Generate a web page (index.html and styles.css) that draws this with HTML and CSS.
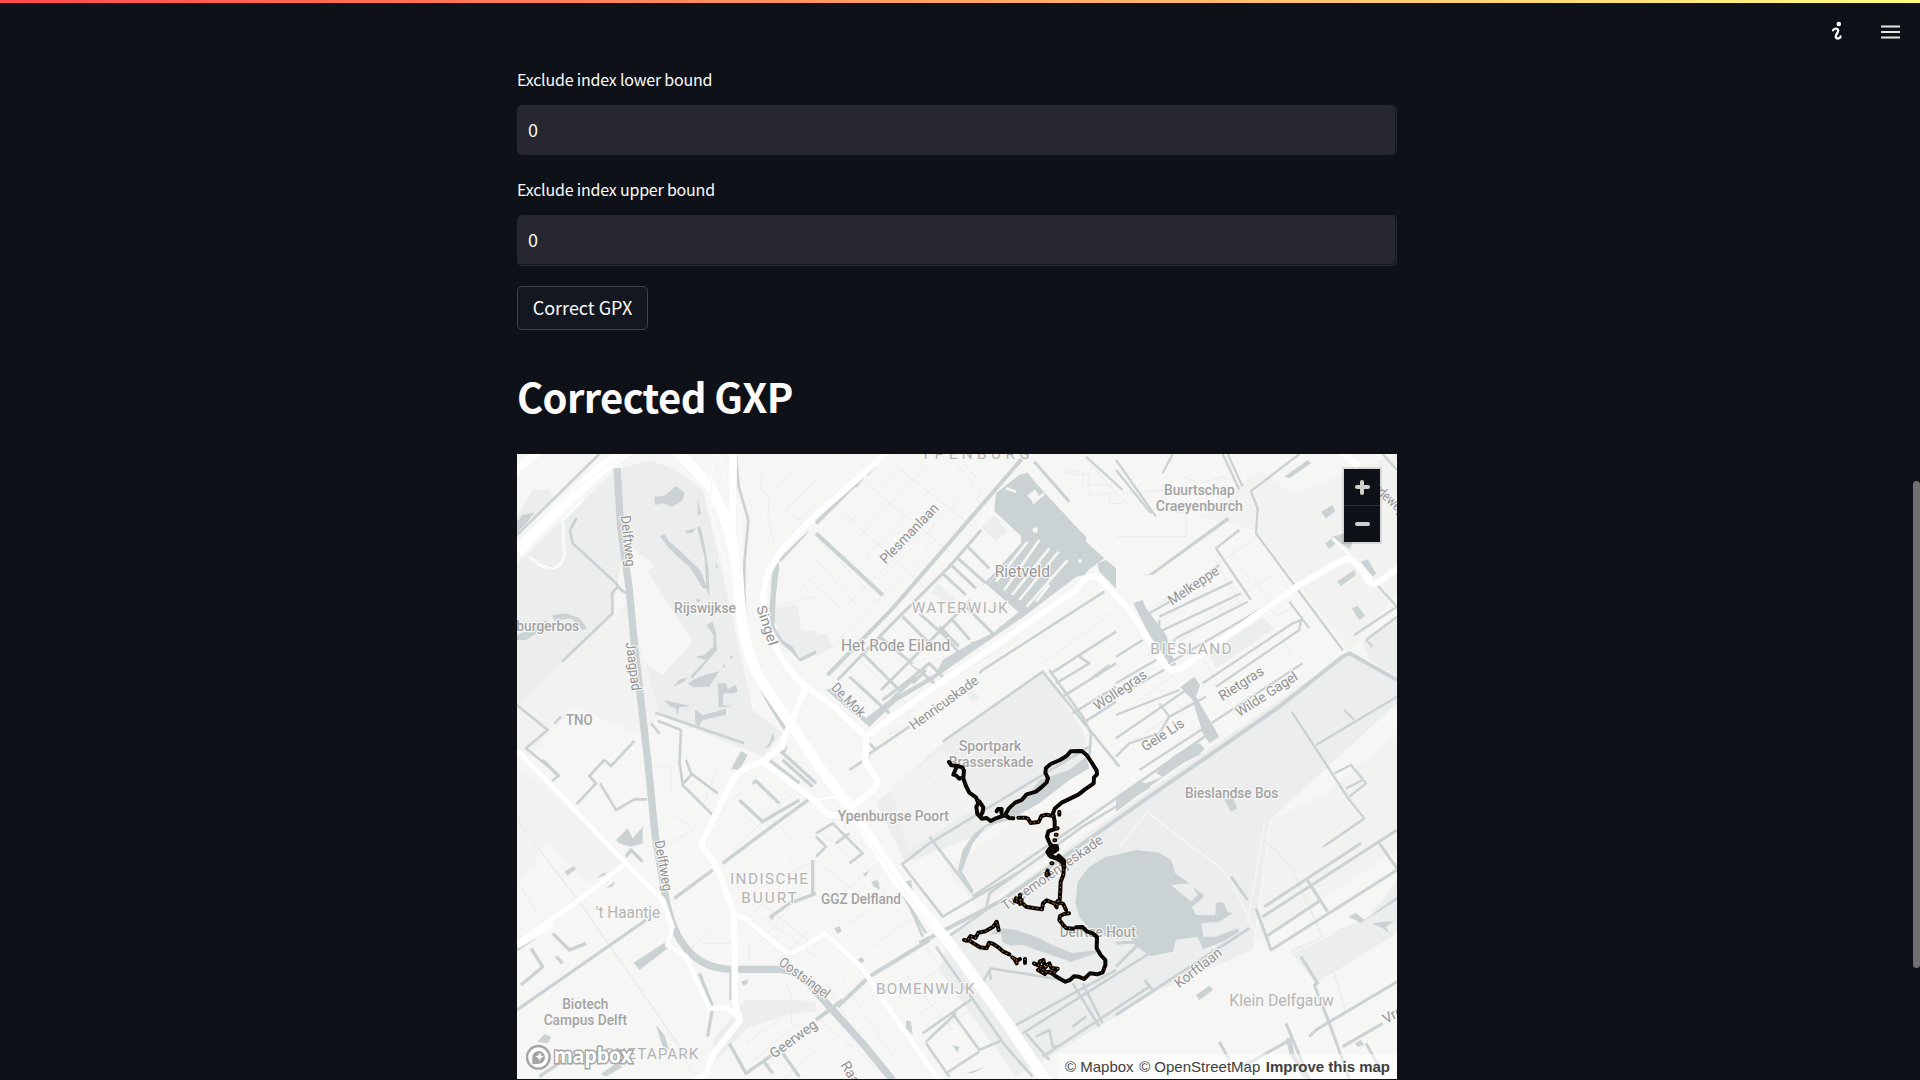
FILE: index.html
```html
<!DOCTYPE html>
<html lang="en">
<head>
<meta charset="utf-8">
<title>GPX Corrector</title>
<link rel="stylesheet" href="styles.css">
</head>
<body>
<div class="decoration"></div>
<header class="toolbar">
  <svg class="info" viewBox="0 0 10 20"><circle cx="6.8" cy="3" r="2.3"/><path d="M1 9.3C2 7.4 5.8 6.8 6.2 9.2C6.5 11.4 2.7 14.6 4 16.6C5 18.2 8 17.5 8.6 15.6"/></svg>
  <svg class="menu" viewBox="0 0 19 14"><path d="M0 1.5H19M0 7H19M0 12.5H19"/></svg>
</header>
<main class="content">
  <label class="field"><span class="field-label">Exclude index lower bound</span><span class="input">0</span></label>
  <label class="field upper"><span class="field-label">Exclude index upper bound</span><span class="input">0</span></label>
  <button class="button">Correct GPX</button>
  <h1>Corrected GXP</h1>
  <section class="map">
  <svg class="map-canvas" viewBox="3 12 2640 1875">
    <!-- Land use -->
    <g class="park">
      <path d="M3 340L300 60L400 30L480 60L560 120L620 370L710 780L800 850L740 920L420 790L390 640L440 675L530 575L395 365L415 345L330 280L300 420L290 490L140 635L3 770Z"/>
      <path d="M3 200L50 120L100 120L110 150L3 240Z"/>
      <path d="M765 475L845 465L855 540L900 545V600L850 632L790 560Z"/>
      <path d="M1280 880L1580 665L1700 840L1720 930L1400 1150L1170 1240L1080 1060Z"/>
      <path d="M1300 1460L1700 1160L2480 620L2500 610L2643 690V760L2260 1110L2210 1500L1930 1620L1500 1880L1270 1560Z"/>
      <path d="M2080 610L2240 500L2275 535L2100 655Z"/>
      <path d="M2643 500L2540 575L2560 630L2643 680Z"/>
      <path d="M2320 1500L2560 1400L2643 1290V1450L2400 1600Z"/>
      <path d="M1245 430L1265 400L1320 450L1300 465ZM900 560L930 550L950 590L900 620ZM1350 730L1370 720L1390 740L1370 755Z"/>
      <path d="M590 1770L640 1710L690 1650L830 1650L900 1655V1685L830 1690L700 1730L600 1830Z"/>
    </g>
    <g class="land">
      <path d="M3 770L140 635L340 450L390 650L430 790L380 860L180 770L30 930L3 900Z"/>
      <path d="M3 940L330 1240L220 1300L100 1180L3 1300Z"/>
      <path d="M1290 1260L1550 1080L1690 1080L1640 1190L1390 1380Z"/>
      <path d="M2265 1110L2430 1030L2643 850V1200L2220 1480Z"/>
      <path d="M1120 1010L1180 1200L1400 1060L1280 900Z"/>
      <path d="M2050 200L2230 60L2330 130L2643 12V430L2500 600L2220 240Z"/>
    </g>
    <!-- Local streets -->
    <g class="street">
      <path d="M725 55l15 30-10 25 30 35-5 70 20 60M800 50l25 25-45 40M810 180l90-90M810 180l40 30 50-50M845 430l55-60M770 475l80-25 50-10"/>
      <path d="M900 100l90-90M950 180l150-160M985 230l190-190M1010 280l220-230M1050 320l250-260M1100 380l270-270M930 530l260-260M940 600l320-330M975 180l270 250M1050 100l280 230M1130 40l240 190M910 270l180 190M900 330l120 130M900 410l70 60"/>
      <path d="M1320 40l80 90-20 20M1340 35l50 60M1640 50l10 20 70 5v60l60-5v30h40M1700 20l140 150M1650 60l50 5v40h90"/>
      <path d="M1320 640l210-150 220-160M1370 650l130-80M1580 640l220-160M1590 680l60 80M1000 600l180 170M980 640l110 120M1120 790l60-70M1220 560l60 60M1240 600l60-60M1060 850l110-80 10 45-60 40"/>
      <path d="M1870 500l200-130 150-110M1890 620l250-160 130-85M1920 520l130-85M1980 580l200-130M2090 320l90 150M2140 290l60 100M2210 380l50 75M2250 450l30 50 50-30 30 40M1800 800l180-130M1810 900l240-160M1960 720l50 80M2060 620l60 100M2180 530l50 90M2240 580l150-100M2290 550l40 70M1800 260h210v-70l-70-10v-60l-120 10M2000 80l50 20 80-20v60"/>
      <path d="M345 1050h50v-100h70v70M470 1090l60 50-100 60M600 960l-40 110 60 50M600 1100l180-180M650 1200l180-170M670 1080l170 160M720 1050l110 120M700 1330l200-100M660 1300l240 190M680 1420l120-120M730 1480l110-130M790 1530l100-100M560 1480h100M520 1500l60-60M700 1470v60M740 1400l160 120"/>
      <path d="M900 1140l170 130 80 120M920 1250l120 90M930 1370l180-150M1000 1420l120-80M1070 1490l110-80M1110 1560l130-90M1150 1640l170-120M1200 1700l180-130M1150 1550l160 190M1230 1490l140 200M980 1590l150 230M900 1700l180 150M930 1600l70 120M1250 1750l150-90"/>
      <path d="M900 1040l60 80M1150 1030l90-50 60 70M1280 960l30-20 30 60M3 1290l60 100M3 1110l190 250 250 360 100 170M810 1600l20 50-5 70M690 1780l110-80M700 1840l160-130M740 1860l130-110M800 1890l100-90"/>
      <path class="wide" d="M3 1110l190 250 250 360 80 110M2140 1080l50 60 90 60 50 60 80 180 30 80 50 170"/>
      <path class="path" d="M1900 1090l100 80 110 80 40 50 50 110 30 60M2245 1120l-30 180-20 120M2320 1480l50-20 230-180M1810 1190l90-110M2250 1550l200-100"/>
    </g>
    <!-- Canals and lakes -->
    <g class="water">
      <path d="M415 140L445 138L480 108L505 128L500 150L470 170L440 160L417 165ZM110 495L150 490L190 505L213 535L200 540L165 505L115 512ZM3 555L40 540L90 510L95 520L70 545L30 570H3ZM3 215L20 195L55 188L35 215L3 250ZM545 148L555 190L545 200ZM507 242L540 235L530 248L512 250ZM432 258L445 253L460 275L490 300L520 330L552 360L575 415L560 415L540 380L520 350L480 315L455 290ZM543 232L553 230L565 280L578 360L580 440L572 420L565 320ZM537 445L555 450L545 460ZM597 338L607 352L600 355Z"/>
      <path d="M572 525L590 515L600 550L603 600L530 685L522 680L570 630L538 620L565 615L592 590L592 555ZM472 710L490 688L515 683L505 695ZM515 700L550 680L610 663L580 710L530 712ZM605 700L630 700L635 718L660 705L665 725L650 730L622 730L620 765L655 768L608 772L607 735ZM445 750L525 768L490 772L483 800L480 775L460 768ZM537 778L560 795L600 785L630 775L630 795L560 810L548 830L538 820ZM618 650L628 640L625 655ZM640 615L652 620L645 628ZM675 903L695 915L670 960L645 957ZM770 848L775 865L760 890L745 895L760 880ZM795 910L815 885L810 905ZM770 340L785 330L790 350L780 430L775 530L800 570L830 590L850 625L900 600V612L852 635L830 610L795 580L765 530L760 480L765 420ZM785 330L880 240L870 255L795 335Z"/>
      <path d="M1440 130L1510 75L1535 68L1560 100L1690 240L1710 260L1710 275L1765 325L1720 358L1705 375L1680 380L1530 495L1340 625L1250 690L1140 755L1060 830L930 720L945 715L1050 805L1120 750L1260 670L1280 630L1305 615L1365 580L1430 550L1500 490L1420 400L1515 290V258L1435 183Z"/>
      <path d="M1745 340L1770 330L1800 355V415L1750 365ZM1000 110L1040 75L1045 80L1025 112Z"/>
      <path d="M1872 372H1900L2135 200L2140 210L1910 375ZM1852 460L1880 450L1890 475L1950 555L1975 635L1960 640L1900 555ZM1992 712L2035 680L2052 705L2040 740L2110 860L2080 880L2060 850L2030 750ZM2305 80L2375 30L2385 40L2320 85ZM2415 185L2450 165L2457 185L2430 205ZM2427 280L2455 260L2465 275L2440 297ZM2463 395L2515 360L2520 375L2475 408ZM2507 475L2525 468L2547 497L2530 510ZM2535 335L2555 328L2580 370L2570 382ZM2450 260L2485 250L2510 280L2500 297Z"/>
      <path d="M1920 970L1970 920L2020 890L2050 880L2065 895L2050 915L2000 940L1900 1010L1800 1085V1040L1870 995L1890 1000L1940 980ZM1325 1265L1340 1200L1375 1150L1430 1110L1550 1020L1570 990L1660 960L1710 920L1720 955L1660 990L1570 1060L1480 1110L1410 1130L1370 1180L1350 1230L1340 1260Z"/>
      <path d="M1800 1215L1860 1200L1930 1208L1965 1230L1978 1270L2020 1300L1965 1305L2025 1355L2045 1335L2030 1310L2063 1335L2060 1345L2028 1370L2040 1395H2098L2100 1360L2120 1355L2135 1385L2150 1390L2110 1415L2055 1420L2062 1460L2100 1460L2165 1435L2170 1445L2120 1475L2062 1497L2045 1460L1980 1470L1970 1505L1905 1518L1860 1490L1845 1465L1800 1465L1730 1450L1690 1400L1678 1360L1685 1295L1720 1250L1770 1220Z"/>
      <path d="M1455 1435L1500 1440L1560 1460L1620 1490L1670 1510L1740 1500V1510L1665 1536L1520 1485L1485 1487L1458 1475ZM1420 1455L1450 1430L1460 1450ZM2123 1045L2150 1040L2163 1075L2145 1085ZM2497 1400L2520 1388L2545 1410L2643 1340V1350L2535 1418ZM2568 1420L2600 1415L2635 1413L2610 1430L2618 1450L2600 1435ZM2040 1635L2080 1607L2092 1620L2050 1650ZM2417 1190L2540 1105L2545 1110L2425 1192ZM2310 1765L2325 1765L2335 1810L2380 1887L2360 1880L2320 1810ZM2517 1780L2535 1770L2545 1785L2525 1790ZM1165 1295l20-5 5 30-12-5ZM1170 1710l15 5 5 40-20-20ZM1310 1785l20 5-5 20ZM1350 1870l60-20-40 20ZM1040 1272l18-10-8 18ZM1065 1295l20-5 7 30-18-10ZM955 1435l15-6 8 14-14 8ZM1022 1530l16-8 8 12-12 6Z"/>
      <path d="M353 1538L445 1478L455 1495L370 1560ZM65 1775L85 1752L105 1760L95 1780ZM255 1872L300 1840L320 1850L270 1880ZM300 1170L335 1135L350 1165L380 1130V1180L345 1190L310 1180ZM145 1265L175 1247L180 1257L155 1277ZM240 1285L268 1265L268 1275ZM270 1315L298 1293L290 1310ZM675 1595L695 1587L695 1600L683 1607ZM757 1400L778 1390L770 1410ZM420 1725L445 1755L460 1800L440 1790Z"/>
    </g>
    <g class="canal">
      <path stroke-width="22" d="M303 55L314 230L340 420L355 580L395 930L418 1160L450 1350Q470 1440 500 1480Q550 1558 650 1558H790Q850 1560 900 1625L1040 1780L1130 1890"/>
      <path stroke-width="8" d="M3 255L250 12M660 12L668 110L697 210L685 340V440M162 240L182 204M162 240L170 280L300 400L320 425M330 430L305 410L288 430L290 490L138 635M418 788L685 880M3 765L95 840L30 895L110 960L128 978L108 993M115 820L135 800M182 1062L240 1000L220 978L265 930L285 948L355 873M252 1000L300 1080L355 1048H392M405 820L430 850M425 812L495 840L490 950M490 930L500 1005L590 1095M510 930L525 970L605 1030M497 1005L530 970"/>
      <path stroke-width="12" d="M900 220L1040 80M1050 75L1100 20M900 250L1100 435M935 675L1130 475L1530 12"/>
      <path stroke-width="9" d="M965 690L1120 530L1300 350L1430 200M1555 35L1660 155M1095 720L1315 500L1430 380L1530 270M1125 750L1200 680M1000 680L1120 790M1040 610L1150 720M1090 560L1200 650M1160 500L1250 590M1100 750L1180 690L1240 640L1280 680M1210 490L1300 570M1300 340L1380 415M1320 320L1410 400M1350 285L1420 355M1280 370L1350 435M1408 395L1520 500M1350 470L1430 550M1310 510L1380 590M1280 550L1330 610M1390 470L1460 540M1270 530L1330 590M1185 640L1255 700M1190 700L1230 660"/>
      <path stroke-width="8" d="M1280 875L1580 665L1810 950M1055 915L1180 830M1390 670L1400 660L1765 425M1605 670L1800 545M1600 660L1700 800L1725 850L1720 925M1620 700L1720 640L1690 620M1640 740L1800 640M1670 790L1800 710M1700 820L1800 755M1000 960L1060 920M1060 880L1080 900M1720 690l60-45M1740 680l40-35"/>
      <path stroke-width="8" d="M1370 1340L1700 1115L2080 850M1160 1245L1280 1400L1510 1265M1240 1160L1370 1330M1330 1260L1370 1325M1155 1245L1240 1180L1720 890M1290 1465L1410 1380L1420 1330L1700 1130L1900 1010"/>
      <path stroke-width="12" d="M1210 1480L1460 1350L1900 1040L2060 930L2290 770L2480 620L2500 610L2643 690M1240 1470L1060 1580L965 1670M900 1710L980 1650"/>
      <path stroke-width="7" d="M1800 30L1920 200M1800 60L1905 190M1710 20L1820 120M1940 70L1970 12M2120 12L2170 120M2135 12L2180 110M2203 125L2350 12M2600 12L2643 60M2205 125L2225 175L2220 250L2480 600M2170 240L2100 295L2205 450M1900 490L1970 450M1970 450L2110 345M1930 500L2150 395M1920 550L2175 430M1980 565L2195 455M1940 650L2350 410M1930 510V530M1975 565V590M2320 455L2380 535M2450 260L2643 470M2515 555L2643 470M2550 570L2643 500M2550 570L2570 590M2060 700L2330 520M2330 520L2355 510L2350 540L2100 710M1800 795L1990 720M1800 865L2040 700M1800 620L1880 570M1800 700L1920 630M1800 740L1980 640M1930 760L1960 800M1800 920L1840 880L1930 850L1960 800L2070 740M1870 960L2070 830L2360 640M2327 785L2500 1050L2545 1105L2430 1185M2400 885L2643 740M2485 780L2515 810M2455 970L2505 945L2550 1000L2500 1040M2490 1015L2540 990"/>
      <path stroke-width="9" d="M2240 1400L2643 1140M2245 1370L2535 1180M2220 1375L2265 1500L2643 1260M2250 1460L2415 1350M2370 1285L2435 1385M2590 1180L2643 1255M2145 1280L2195 1350M1800 1695L1930 1610L2200 1435M1800 1550L1860 1490M1800 1480L1870 1475M1885 1590L1910 1620M2355 1520L2405 1600L2395 1605L2440 1720L2500 1887M2380 1760L2400 1740L2643 1595M2480 1790L2600 1720M2550 1780L2600 1870M2110 1775L2140 1830M2180 1850L2330 1765M2310 1720L2380 1887"/>
      <path stroke-width="8" d="M1420 1560L1425 1590M1400 1595L1425 1555L1640 1590M1500 1725L1800 1560M1520 1750L1900 1510M1670 1600L1750 1730M1700 1600L1760 1720M1580 1820L1900 1610M1560 1760L1600 1740L1610 1790L1640 1785M1530 1750L1600 1830M1670 1730L1710 1700M1220 1750L1370 1645M1230 1775L1320 1690M1310 1690L1390 1800L1460 1770M1230 1780L1300 1880M1390 1805L1290 1870M1260 1490L1470 1790L1550 1880M1000 1070L1230 1450M1010 1100L1140 1270L1220 1460M1000 1240L1040 1210L950 1120L900 1150M960 1180L1000 1150M900 1220L930 1190L900 1160"/>
      <path stroke-width="10" d="M3 1680L390 1410M475 1345L590 1260M620 1240L780 1120L890 1040M670 1050L740 1115L850 1050M710 1000L720 993L790 1060M3 1500L60 1460M110 1450L160 1500L210 1480M45 1495L80 1550L15 1605M120 1520L140 1540M765 1400L820 1360L900 1330M890 1330V1230M640 1780L690 1870L790 1800M740 1830L770 1870M800 1810L850 1880M550 1570L590 1670L575 1760M645 1570V1650M70 1880L150 1825M330 1220L345 1200L380 1235M80 930L128 978M760 930L850 1000M800 930L890 1010M780 890L900 1000M685 440L690 600Q720 710 810 840"/>
    </g>
    <g class="gap">
      <path d="M1470 115L1500 125M1550 160L1585 130M1440 395L1535 275M1465 420L1570 270M1488 435L1600 295M1510 450L1628 305M1532 470L1655 330M1560 455L1600 405M1330 590L1370 570M1190 640L1210 655"/>
      <path d="M1540 137L1556 125L1567 140L1552 152Z"/>
      <circle cx="1558" cy="240" r="4"/><circle cx="1692" cy="333" r="2"/>
      <path d="M1355 440L1408 400L1508 487L1445 535L1390 485Z" class="island"/>
    </g>
    <path class="plot" d="M1435 190L1392 232L1440 277L1478 245Z"/>
    <!-- Main roads -->
    <g class="road">
      <path stroke-width="34" d="M480 0L580 105Q640 200 665 380Q675 600 740 700L810 800L910 950L1000 1070L1150 1300L1300 1480L1460 1700L1595 1900"/>
      <path stroke-width="23" d="M652 0L648 240L670 400"/>
      <path stroke-width="38" d="M350 -15L240 70L120 185L3 305"/>
      <path stroke-width="26" d="M-10 70L65 5"/>
      <path stroke-width="20" d="M1120 0L1060 55L900 195L830 265Q745 350 742 440Q745 600 870 710L960 775L1050 860L1200 750L1400 612L1680 420Q1725 350 1760 395L1840 480L1950 650Q1970 672 2010 645L2230 490L2350 405L2480 330Q2505 320 2525 345L2555 390Q2570 408 2590 395L2650 350"/>
      <path stroke-width="20" d="M1050 855L1048 935L1085 990Q1088 1010 1060 1030L980 1090Q940 1115 900 1055L740 935Q660 955 640 1010L555 1185L600 1245L655 1390L657 1660L672 1710L610 1790Q575 1830 575 1870L510 1900M870 710L795 890L740 935"/>
      <path stroke-width="16" d="M3 900L330 1240L440 1350L468 1430L455 1485L510 1520L580 1675L630 1672L670 1705M330 1240L170 1365L3 1480M655 1405Q680 1390 710 1425L815 1510Q830 1515 925 1450L1040 1555L1100 1650L1275 1900"/>
      <path stroke-width="22" d="M2470 0L2530 50M110 1420L3 1485"/>
      <path stroke-width="9" d="M598 0L585 120Q580 220 645 380M610 0L625 80L675 180L672 380M140 210L145 310Q140 355 100 355Q70 350 40 320M140 210L200 150M900 1050L960 1040L1010 1090M2450 265L2570 385"/>
    </g>
    <g class="ramp"><path d="M598 0L585 120Q580 220 645 380M610 0L625 80L675 180L672 380M140 210L145 310Q140 355 100 355Q70 350 40 320M3 270L180 115L330 12M2450 265L2570 385M980 1060L1100 1230L1300 1510"/></g>
    <!-- Place names -->
    <g class="label road-name">
      <text transform="translate(337 273) rotate(84)" dy=".35em" textLength="154" lengthAdjust="spacingAndGlyphs">Delftweg</text>
      <text transform="translate(353 649) rotate(83)" dy=".35em" textLength="146" lengthAdjust="spacingAndGlyphs">Jaagpad</text>
      <text transform="translate(754 526) rotate(72)" dy=".35em" textLength="124" lengthAdjust="spacingAndGlyphs">Singel</text>
      <text transform="translate(1179 250) rotate(-46)" dy=".35em" textLength="232" lengthAdjust="spacingAndGlyphs">Plesmanlaan</text>
      <text transform="translate(998 749) rotate(45)" dy=".35em" textLength="124" lengthAdjust="spacingAndGlyphs">De Mok</text>
      <text transform="translate(1283 758) rotate(-36)" dy=".35em" textLength="244" lengthAdjust="spacingAndGlyphs">Henricuskade</text>
      <text transform="translate(2032 406) rotate(-34)" dy=".35em" textLength="174" lengthAdjust="spacingAndGlyphs">Melkeppe</text>
      <text transform="translate(1812 720) rotate(-34)" dy=".35em" textLength="182" lengthAdjust="spacingAndGlyphs">Wollegras</text>
      <text transform="translate(2175 700) rotate(-33)" dy=".35em" textLength="152" lengthAdjust="spacingAndGlyphs">Rietgras</text>
      <text transform="translate(2251 732) rotate(-33)" dy=".35em" textLength="212" lengthAdjust="spacingAndGlyphs">Wilde Gagel</text>
      <text transform="translate(1940 854) rotate(-33)" dy=".35em" textLength="144" lengthAdjust="spacingAndGlyphs">Gele Lis</text>
      <text transform="translate(443 1247) rotate(80)" dy=".35em" textLength="154" lengthAdjust="spacingAndGlyphs">Delftweg</text>
      <text transform="translate(866 1583) rotate(36)" dy=".35em" textLength="178" lengthAdjust="spacingAndGlyphs">Oostsingel</text>
      <text transform="translate(832 1766) rotate(-36)" dy=".35em" textLength="164" lengthAdjust="spacingAndGlyphs">Geerweg</text>
      <text transform="translate(1608 1268) rotate(-35)" dy=".35em" textLength="360" lengthAdjust="spacingAndGlyphs">Tweemolentjeskade</text>
      <text transform="translate(2046 1553) rotate(-38)" dy=".35em" textLength="166" lengthAdjust="spacingAndGlyphs">Korftlaan</text>
      <text transform="translate(1014 1885) rotate(59)" dy=".35em" textLength="112" lengthAdjust="spacingAndGlyphs">Raam</text>
      <text transform="translate(2650 1682) rotate(-30)" dy=".35em" textLength="110" lengthAdjust="spacingAndGlyphs">Vrede</text>
      <text transform="translate(2601 128) rotate(42)" dy=".35em" textLength="174" lengthAdjust="spacingAndGlyphs">Noordeweg</text>
    </g>
    <g class="label place">
      <text x="567" y="489" textLength="186" lengthAdjust="spacingAndGlyphs">Rijswijkse</text>
      <text x="95" y="543" textLength="188" lengthAdjust="spacingAndGlyphs">burgerbos</text>
      <text x="190" y="826" textLength="80" lengthAdjust="spacingAndGlyphs">TNO</text>
      <text x="1422" y="903" textLength="188" lengthAdjust="spacingAndGlyphs">Sportpark</text>
      <text x="1425" y="950" textLength="254" lengthAdjust="spacingAndGlyphs">Brasserskade</text>
      <text x="2050" y="136" textLength="212" lengthAdjust="spacingAndGlyphs">Buurtschap</text>
      <text x="2050" y="183" textLength="262" lengthAdjust="spacingAndGlyphs">Craeyenburch</text>
      <text x="208" y="1677" textLength="138" lengthAdjust="spacingAndGlyphs">Biotech</text>
      <text x="208" y="1725" textLength="250" lengthAdjust="spacingAndGlyphs">Campus Delft</text>
      <text x="1132" y="1112" textLength="334" lengthAdjust="spacingAndGlyphs">Ypenburgse Poort</text>
      <text x="1035" y="1361" textLength="240" lengthAdjust="spacingAndGlyphs">GGZ Delfland</text>
      <text x="2147" y="1043" textLength="280" lengthAdjust="spacingAndGlyphs">Bieslandse Bos</text>
      <text x="1745" y="1461" textLength="228" lengthAdjust="spacingAndGlyphs">Delftse Hout</text>
    </g>
    <g class="label town">
      <text x="1519" y="382" textLength="166" lengthAdjust="spacingAndGlyphs">Rietveld</text>
      <text x="1139" y="602" textLength="328" lengthAdjust="spacingAndGlyphs">Het Rode Eiland</text>
      <text class="pale" x="336" y="1404" textLength="193" lengthAdjust="spacingAndGlyphs">'t Haantje</text>
      <text class="pale" x="2297" y="1669" textLength="314" lengthAdjust="spacingAndGlyphs">Klein Delfgauw</text>
    </g>
    <g class="label district">
      <text x="1378" y="27" textLength="326">YPENBURG</text>
      <text x="1331" y="489" textLength="288">WATERWIJK</text>
      <text x="2025" y="611" textLength="244">BIESLAND</text>
      <text x="759" y="1303" textLength="234">INDISCHE</text>
      <text x="759" y="1358" textLength="166">BUURT</text>
      <text x="1228" y="1632" textLength="296">BOMENWIJK</text>
      <text x="389" y="1826" textLength="316">AGNETAPARK</text>
    </g>
    <!-- Recorded track -->
    <defs>
      <g id="loop" transform="translate(1242 870)">
        <path d="M57 66L64 76L82 78L97 82L102 92L100 112L88 116L78 106L70 104L78 85M100 115L108 138L118 158L138 172L145 190L139 200L142 222L155 236L170 234L182 243L198 235L225 225L236 206L255 188L275 180L290 163L318 155L333 143L350 127L354 115L346 98L348 84L362 72L390 60L410 48L422 34L455 33L470 45L484 66L500 92L501 103L492 112L491 130L465 148L445 164L395 188L375 205L369 220L374 243L374 267L355 274L351 290L357 305M148 184L160 202L158 216L150 230M225 225L238 234L250 235M200 214L204 207L215 207L214 218"/>
        <path d="M360 312L366 318L380 318L382 328L374 334L357 344L352 336L366 316L373 324L355 332L362 350L380 356L386 347L402 362L402 380L396 365L374 352L358 346M438 562L458 561L470 574L488 580L501 592L500 625L512 645L526 660L526 675L518 697L502 703L480 700L462 717L446 710L432 709L420 720L406 725L390 716L375 707L358 695"/>
      </g>
      <g id="trail" transform="translate(1242 870)">
        <path d="M265 233L285 233L294 236L302 249L326 246L334 228L350 224L370 228M402 375L400 405L392 425L391 450L389 480L382 494L350 481L339 490L336 508L310 504L288 500L278 490L255 483M382 484L400 492L408 510M373 490L380 502M258 475L275 480M270 465V492M417 520L402 522L390 528L388 540L398 553L408 564L430 566"/>
        <path d="M206 570L200 545L190 560L166 574L145 578L136 594L122 588L112 602L102 600M120 603L135 613L150 622L170 625L177 608L190 612L205 622L220 635L238 643"/>
        <path d="M247 652L262 662L270 657M252 655L260 670M285 657V669M312 670L325 676L330 664L340 660L344 680L358 670L364 684L383 686L370 698L345 695L338 690L348 680L330 680M324 690L345 702M350 400L353 392M350 406L356 402M388 215V224M380 266L383 265M377 284h3M373 301h3M364 370h3"/>
      </g>
    </defs>
    <use href="#loop" class="track"/>
    <use href="#loop" class="points dense"/>
    <use href="#trail" class="track"/>
    <use href="#trail" class="points"/>
    <g class="logo"><circle cx="67" cy="1822" r="34"/><path class="drop" d="M49 1843V1820A19 19 0 1 1 69 1841Z"/><path class="spark" d="M71 1808L75 1816L83 1820L75 1824L71 1832L67 1824L59 1820L67 1816Z"/><text x="113" y="1838" textLength="236" lengthAdjust="spacingAndGlyphs">mapbox</text></g>
  </svg>
  <div class="zoom"><span><i class="plus"></i></span><span><i></i></span></div>
  <div class="credits"><span>© Mapbox</span><span>© OpenStreetMap</span><strong>Improve this map</strong></div>
  </section>
</main>
<div class="scrollbar"></div>
</body>
</html>
```
FILE: styles.css
```css
* { box-sizing: border-box; }
body { margin: 0; height: 1080px; overflow: hidden; background: #0e1117; color: #fafafa; font-family: "Noto Sans CJK SC", "Noto Sans", sans-serif; }
.decoration { position: absolute; top: 0; left: 0; right: 0; height: 3px; background: linear-gradient(90deg, #ff4b4b, #fffd80); }
.toolbar { position: absolute; top: 21px; right: 20px; display: flex; align-items: center; gap: 39px; }
.info { width: 10px; height: 20px; fill: #fafafa; }
.info path { fill: none; stroke: #fafafa; stroke-width: 2.4; stroke-linecap: round; }
.menu { width: 19px; height: 14px; margin-top: 1px; stroke: #e4e4e1; stroke-width: 2; }
.content { width: 880px; margin-left: 517px; padding-top: 66px; display: flex; flex-direction: column; align-items: flex-start; }
.field { width: 100%; display: flex; flex-direction: column; margin-bottom: 21px; }
.field-label { height: 39px; line-height: 27px; font-size: 16px; letter-spacing: -.2px; }
.input { height: 50px; padding: 0 11px; background: #262730; border-radius: 5px; line-height: 48px; font-size: 18px; box-shadow: inset -1px 0 #262730, inset -2px 0 #14171e; }
.upper { margin-bottom: 20px; }
.upper .input { height: 51px; box-shadow: inset -1px -1px #262730, inset -2px -2px #14171e; }
.button { width: 131px; height: 44px; padding: 0; color: #fafafa; background: #131720; border: 1px solid #41434a; border-radius: 5px; font: 18px/40px "Noto Sans CJK SC", sans-serif; }
.button { padding-bottom: 2px; }
h1 { margin: 34px 0 26px; height: 64px; line-height: 64px; font-size: 40px; font-weight: 700; letter-spacing: -.65px; white-space: nowrap; }
.map { position: relative; width: 880px; height: 625px; background: #f6f6f4; overflow: hidden; flex: none; }
.map-canvas { display: block; width: 880px; height: 625px; }
.park { fill: #eceeed; }
.plot { fill: #eceeed; stroke: #f6f6f4; stroke-width: 6; }
.land { fill: #f2f2f0; }
.water { fill: #cad2d3; }
.street { fill: none; stroke: #e7ebea; stroke-width: 2.5; }
.street .wide { stroke-width: 6; stroke: #ebeeed; }
.street .path { stroke: #f4f5f4; stroke-width: 5; }
.canal { fill: none; stroke: #cad2d3; stroke-linejoin: round; }
.gap { fill: #f6f6f4; stroke: #f6f6f4; stroke-width: 8; }
.gap .island { stroke: none; }
.gap path:first-child { fill: none; }
.road { fill: none; stroke: #fff; stroke-linejoin: round; filter: drop-shadow(0 0 2px #d9dfde); }
.ramp { fill: none; stroke: #eceeee; stroke-width: 2; }
.label { font-family: Roboto, "Open Sans", sans-serif; text-anchor: middle; stroke: #f8f8f7; stroke-width: 7px; paint-order: stroke; stroke-linejoin: round; fill: #a3a3a3; }
.road-name { font-size: 42px; fill: #929292; }
.place { font-size: 43px; font-weight: 500; }
.town { font-size: 48px; fill: #999; }
.town .pale { fill: #b5b5b5; }
.district { font-size: 46px; fill: #b4b4b4; }
.track { fill: none; stroke: #080503; stroke-width: 12; stroke-linecap: round; stroke-linejoin: round; }
.points { fill: none; stroke: #c47a33; stroke-width: 3.5; stroke-dasharray: 3.5 10; }
.dense { stroke: #4a2a0c; stroke-width: 3; stroke-dasharray: 3 13; }
.logo { fill: #fff; stroke: #a5a5a5; stroke-width: 7; }
.logo .drop { fill: #a5a5a5; stroke: none; }
.logo .spark { stroke: none; }
.logo text { font: 700 62px "Open Sans", sans-serif; paint-order: stroke; stroke-width: 9; }
.zoom { position: absolute; top: 15px; right: 17px; width: 36px; height: 73px; background: #0e1117; box-shadow: 0 0 0 2px rgba(0,0,0,.1); display: flex; flex-direction: column; }
.zoom span { flex: 1; display: grid; place-items: center; }
.zoom span + span { border-top: 1px solid #2a2d33; }
.zoom i { position: relative; width: 15px; height: 4px; border-radius: 2px; background: #d0d0cd; }
.zoom .plus::after { content: ""; position: absolute; left: 5.5px; top: -5.5px; width: 4px; height: 15px; border-radius: 2px; background: #d0d0cd; }
.credits { position: absolute; right: 0; bottom: 0; height: 25px; width: 338px; padding: 0 7px 0 6px; display: flex; justify-content: space-between; background: rgba(255,255,255,.5); color: #404040; font: 15px/25px "Liberation Sans", sans-serif; white-space: nowrap; }
.scrollbar { position: absolute; right: 0; top: 481px; width: 7px; height: 487px; background: #707073; border-radius: 4px; }
```
